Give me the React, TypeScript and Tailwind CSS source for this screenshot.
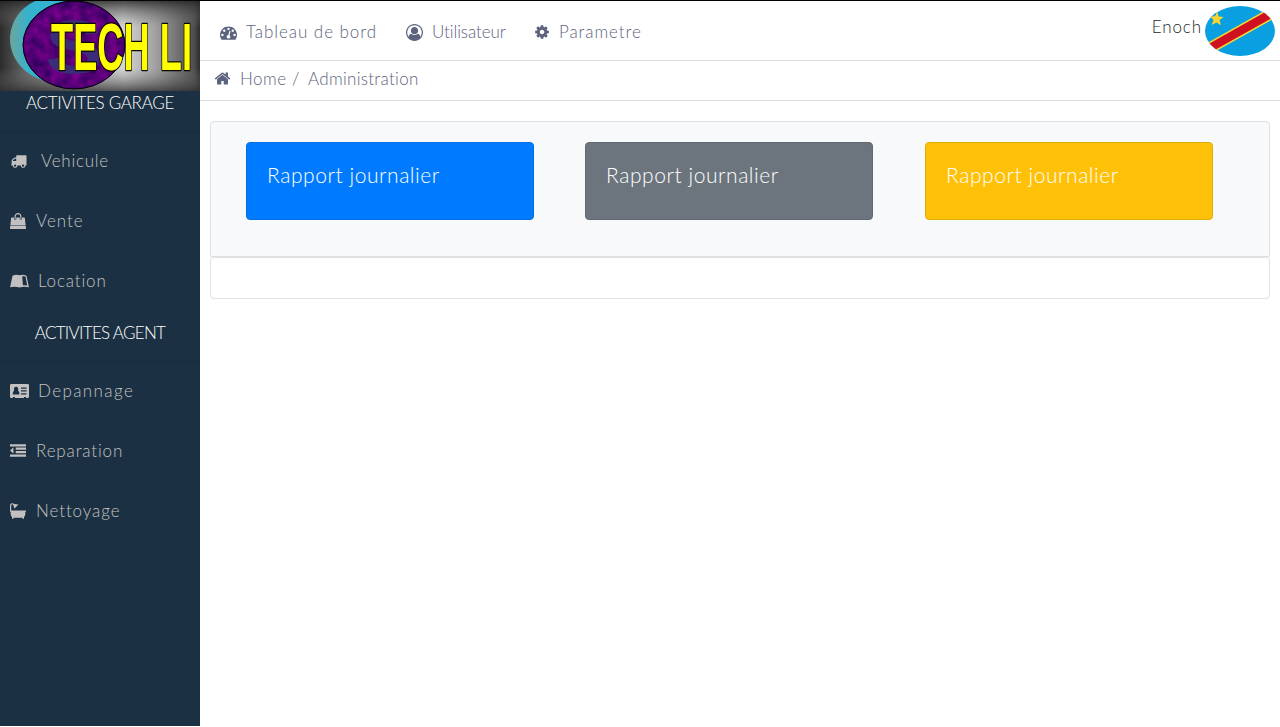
import React from 'react';

type IconProps = { d: string; w: number; h?: number; vb?: string; className?: string };
function Icon({ d, w, h = 16, vb = '0 0 1792 1792', className = '' }: IconProps) {
  return (
    <svg width={w} height={h} viewBox={vb} fill="currentColor" fillRule="evenodd" className={`shrink-0 ${className}`}>
      <path d={d} />
    </svg>
  );
}

const HOME = 'M1472 992v480q0 26-19 45t-45 19h-384v-384h-256v384h-384q-26 0-45-19t-19-45v-480q0-1 .5-3t.5-3l575-474 575 474q1 2 1 6zm223-69l-62 74q-8 9-21 11h-3q-13 0-21-7l-692-577-692 577q-12 8-24 7-13-2-21-11l-62-74q-8-10-7-23.5t11-21.5l719-599q32-26 76-26t76 26l244 204v-195q0-14 9-23t23-9h192q14 0 23 9t9 23v408l219 182q10 8 11 21.5t-7 23.5z';
const COG = 'M1152 896q0-106-75-181t-181-75-181 75-75 181 75 181 181 75 181-75 75-181zm512-109v222q0 12-8 23t-20 13l-185 28q-19 54-39 91 35 50 107 138 10 12 10 25t-9 23q-27 37-99 108t-94 71q-12 0-26-9l-138-108q-44 23-91 38-16 136-29 186-7 28-36 28h-222q-14 0-24.5-8.5t-11.5-21.5l-28-184q-49-16-90-37l-141 107q-10 9-25 9-14 0-25-11-126-114-165-168-7-10-7-23 0-12 8-23 15-21 51-66.5t54-70.5q-27-50-41-99l-183-27q-13-2-21-12.5t-8-23.5v-222q0-12 8-23t19-13l186-28q14-46 39-92-40-57-107-138-10-12-10-24 0-10 9-23 26-36 98.5-107.5t94.5-71.5q13 0 26 10l138 107q44-23 91-38 16-136 29-186 7-28 36-28h222q14 0 24.5 8.5t11.5 21.5l28 184q49 16 90 37l142-107q9-9 24-9 13 0 25 10 129 119 165 170 7 8 7 22 0 12-8 23-15 21-51 66.5t-54 70.5q26 50 41 98l183 28q13 2 21 12.5t8 23.5z';
const TRUCK = 'M640 1408q0-52-38-90t-90-38-90 38-38 90 38 90 90 38 90-38 38-90zm-384-512h384v-256h-158q-13 0-22 9l-195 195q-9 9-9 22v30zm1280 512q0-52-38-90t-90-38-90 38-38 90 38 90 90 38 90-38 38-90zm256-1088v1024q0 15-4 26.5t-13.5 18.5-16.5 11.5-23.5 6-22.5 2-25.5 0-22.5-.5q0 106-75 181t-181 75-181-75-75-181h-384q0 106-75 181t-181 75-181-75-75-181h-64q-3 0-22.5.5t-25.5 0-22.5-2-23.5-6-16.5-11.5-13.5-18.5-4-26.5q0-26 19-45t45-19v-320q0-8-.5-35t0-38 2.5-34.5 6.5-37 14-30.5 22.5-30l198-198q19-19 50.5-32t58.5-13h160v-192q0-26 19-45t45-19h1024q26 0 45 19t19 45z';
const GAUGE = 'M384 1152q0-53-37.5-90.5t-90.5-37.5-90.5 37.5-37.5 90.5 37.5 90.5 90.5 37.5 90.5-37.5 37.5-90.5zm192-448q0-53-37.5-90.5t-90.5-37.5-90.5 37.5-37.5 90.5 37.5 90.5 90.5 37.5 90.5-37.5 37.5-90.5zm428 481l101-382q6-26-7.5-48.5t-38.5-29.5-48 6.5-30 39.5l-101 382q-60 5-107 43.5t-63 98.5q-20 77 20 146t117 89 146-20 89-117q16-60-6-117t-72-91zm660-33q0-53-37.5-90.5t-90.5-37.5-90.5 37.5-37.5 90.5 37.5 90.5 90.5 37.5 90.5-37.5 37.5-90.5zm-640-640q0-53-37.5-90.5t-90.5-37.5-90.5 37.5-37.5 90.5 37.5 90.5 90.5 37.5 90.5-37.5 37.5-90.5zm448 192q0-53-37.5-90.5t-90.5-37.5-90.5 37.5-37.5 90.5 37.5 90.5 90.5 37.5 90.5-37.5 37.5-90.5zm320 448q0 261-141 483-19 29-54 29h-1402q-35 0-54-29-141-221-141-483 0-182 71-348t191-286 286-191 348-71 348 71 286 191 191 286 71 348z';
const USER = 'M896 0q182 0 348 71t286 191 191 286 71 348q0 181-70.5 347t-190.5 286-286 191.5-349 71.5-349-71-285.5-191.5-190.5-286-71-347.5 71-348 191-286 286-191 348-71zm619 1351q149-205 149-455 0-156-61-298t-164-245-245-164-298-61-298 61-245 164-164 245-61 298q0 250 149 455 66-327 306-327 131 128 313 128t313-128q240 0 306 327zm-235-647q0-159-112.5-271.5t-271.5-112.5-271.5 112.5-112.5 271.5 112.5 271.5 271.5 112.5 271.5-112.5 112.5-271.5z';
const OUTDENT = 'M384 544v576q0 13-9.5 22.5t-22.5 9.5q-14 0-23-9l-288-288q-9-9-9-23t9-23l288-288q9-9 23-9 13 0 22.5 9.5t9.5 22.5zM0 1280h1792v256H0zM640 896h1152v256H640zM640 512h1152v256H640zM0 128h1792v256H0z';
const BAG = 'M1757 1408l35 313q3 28-16 50-19 21-48 21h-1664q-29 0-48-21-19-22-16-50l35-313h1722zm-93-839l86 775h-1708l86-775q3-24 21-40.5t43-16.5h256v128q0 53 37.5 90.5t90.5 37.5 90.5-37.5 37.5-90.5v-128h384v128q0 53 37.5 90.5t90.5 37.5 90.5-37.5 37.5-90.5v-128h256q25 0 43 16.5t21 40.5zm-384-185v256q0 26-19 45t-45 19-45-19-19-45v-256q0-106-75-181t-181-75-181 75-75 181v256q0 26-19 45t-45 19-45-19-19-45v-256q0-159 112.5-271.5t271.5-112.5 271.5 112.5 112.5 271.5z';
const BOOK = 'M2.500 2.700Q6 .9 9.500 2.300Q13 .9 16.500 2.700L18.900 14.200Q14 13 9.500 14.500Q5 13 .1 14.200ZM12.200 3.300L12.900 12.300Q15 12 17.200 12.500L15.500 3.600Q13.800 3 12.200 3.300Z';
const CARD = 'M1.300 1H17.700Q19 1 19 2.300V13.700Q19 15 17.700 15H16V14H14V15H5V14H3V15H1.300Q0 15 0 13.700V2.300Q0 1 1.300 1ZM2.700 11.500H9.400Q9.700 8.400 8.100 7.800Q9 4 6.100 3.700Q3.200 4 4.100 7.800Q2.500 8.400 2.700 11.500ZM11 4.500V5.700H16.600V4.500ZM11 7.300V8.500H16.600V7.300ZM11 10.200V11.400H16.600V10.200Z';
const BATH = 'M0 8V2.600Q0 .2 2.300 .2Q3.700 .2 4.300 1.300Q5.800 .6 7 1.500L7.500 1L8.200 1.700L4.500 5.400L3.800 4.700L4.200 4.200Q3.300 3.400 3.300 2.100Q2.900 1.300 2.200 1.300Q1.200 1.400 1.200 2.600V7.500H16V8.800H15.300V11Q15.300 13 14 13.900V15.700H12.500V14.700H3.500V15.700H2V13.900Q.7 13 .7 11V8.800H0Z';

function Logo() {
  return (
    <svg width="200" height="91" viewBox="0 0 200 91" className="block shrink-0">
      <defs>
        <linearGradient id="metal">
          <stop offset="0" stopColor="#222" />
          <stop offset=".12" stopColor="#5c5c5c" />
          <stop offset=".3" stopColor="#a0a0a0" />
          <stop offset=".62" stopColor="#dedede" />
          <stop offset=".78" stopColor="#a2a2a2" />
          <stop offset=".97" stopColor="#484848" />
          <stop offset="1" stopColor="#222" />
        </linearGradient>
        <linearGradient id="shade" x2="0" y2="1">
          <stop offset="0" stopColor="#222" stopOpacity=".85" />
          <stop offset=".3" stopColor="#888" stopOpacity=".1" />
          <stop offset=".75" stopColor="#888" stopOpacity=".1" />
          <stop offset="1" stopColor="#333" stopOpacity=".8" />
        </linearGradient>
        <linearGradient id="cyan"><stop stopColor="#6ca59c" /><stop offset=".2" stopColor="#35b2cd" /></linearGradient>
        <filter id="grain"><feTurbulence type="fractalNoise" baseFrequency=".1" numOctaves="3" seed="4" /><feColorMatrix values="0 0 0 0 .33 0 0 0 0 0 0 0 0 0 .36 0 0 0 1.1 -.2" /><feComposite in2="SourceGraphic" operator="in" /></filter>
      </defs>
      <path fill="url(#metal)" d="M0 0h200v91H0z" />
      <path fill="url(#shade)" d="M0 0h200v91H0z" />
      <ellipse cx="57" cy="39" rx="47" ry="43" fill="url(#cyan)" />
      <ellipse cx="74" cy="45" rx="51" ry="44" fill="#32005f" stroke="#050008" />
      <ellipse cx="74" cy="45" rx="50" ry="43" fill="#41006e" filter="url(#grain)" />
      <text x="45" y="73" fontFamily="Liberation Sans" fontWeight="bold" fontSize="76" textLength="58" lengthAdjust="spacingAndGlyphs" fill="#3c2b78">S</text>
      <text
        x="51" y="69.500" fontFamily="Liberation Sans" fontWeight="bold" fontSize="67"
        textLength="141" lengthAdjust="spacingAndGlyphs" fill="#ffff00" stroke="#090900"
        strokeWidth="2.500" strokeLinejoin="round" paintOrder="stroke"
      >TECH LI</text>
      <path fill="#050505" d="M0 0h200v1H0z" />
    </svg>
  );
}

function Entry({ icon, label, gap, className }: { icon: React.ReactNode; label: string; gap: string; className: string }) {
  return <a className={`flex h-[60px] items-center pl-[10px] text-[#c3c0c1] ${gap}`}>{icon}<span className={className}>{label}</span></a>;
}

function Report({ className }: { className: string }) {
  return (
    <div className={`h-[78px] w-[288px] rounded border pl-5 pt-4 text-[21px] leading-8 tracking-[0.56px] text-white ${className}`}>
      Rapport journalier
    </div>
  );
}

function Flag() {
  return (
    <svg width="70" height="50" viewBox="0 0 70 50" className="shrink-0">
      <clipPath id="oval"><ellipse cx="35" cy="25" rx="35" ry="25" /></clipPath>
      <g clipPath="url(#oval)">
        <path fill="#0a9fe0" d="M0 0h70v50H0z" />
        <path stroke="#f7d632" strokeWidth="11.500" d="M-4 47L76 2" />
        <path stroke="#ce1021" strokeWidth="8.400" d="M-4 47L76 2" />
        <path fill="#f7d632" d="M12.200 5.500L13.700 10.500L18.700 11.100L14.600 14.100L16 19.300L11.500 16.500L6.700 19L8.500 14L5 10.400L10 10.300Z" />
      </g>
    </svg>
  );
}

export default function App() {
  return (
    <div className="flex h-[727px] w-[1280px] overflow-hidden bg-white font-['Lato','Noto_Sans',sans-serif] text-[17px] font-light leading-6">
      <aside className="flex h-[726px] w-[200px] shrink-0 flex-col bg-[#1b3143]">
        <Logo />
        <h2 className="h-[41px] border-b border-[#182c3d] text-center font-light tracking-[-0.3px] text-white">ACTIVITES GARAGE</h2>
        <div className="-mt-px">
          <Entry icon={<Icon d={TRUCK} w={17} />} label="Vehicule" gap="gap-[14px]" className="tracking-[0.75px]" />
          <Entry icon={<Icon d={BAG} w={16} />} label="Vente" gap="gap-[10px]" className="tracking-[0.95px]" />
          <Entry icon={<Icon d={BOOK} w={19} vb="0 0 19 16" />} label="Location" gap="gap-[9px]" className="tracking-[0.85px]" />
        </div>
        <h2 className="mt-[10px] h-[41px] border-b border-[#182c3d] text-center font-light tracking-[-0.7px] text-white">ACTIVITES AGENT</h2>
        <div className="-mt-px">
          <Entry icon={<Icon d={CARD} w={19} vb="0 0 19 16" />} label="Depannage" gap="gap-[9px]" className="tracking-[1.4px]" />
          <Entry icon={<Icon d={OUTDENT} w={16} />} label="Reparation" gap="gap-[10px]" className="tracking-[0.85px]" />
          <Entry icon={<Icon d={BATH} w={16} vb="0 0 16 16" />} label="Nettoyage" gap="gap-[10px]" className="tracking-[0.9px]" />
        </div>
      </aside>
      <main className="min-w-0 flex-1 border-t border-black">
        <header className="flex h-[60px] justify-between border-b border-[#d8dadd] pl-5 pr-[5px] text-[#5c637d]">
          <nav className="flex h-[62px] items-center">
            <a className="flex w-[186px] items-center gap-[10px]"><Icon d={GAUGE} w={17} h={17} /><span className="-ml-px tracking-[0.95px]">Tableau de bord</span></a>
            <a className="flex w-[129px] items-center gap-[10px]"><Icon d={USER} w={17} h={17} /><span className="-ml-px tracking-[-0.1px]">Utilisateur</span></a>
            <a className="flex items-center gap-[9px]"><Icon d={COG} w={16} className="-ml-px" /><span className="tracking-[0.9px]">Parametre</span></a>
          </nav>
          <div className="flex h-[60px] items-center gap-1 text-[#212529]"><span className="-mr-px mb-2 tracking-[0.9px]">Enoch</span><Flag /></div>
        </header>
        <div className="flex h-[40px] items-center border-b border-[#d8dadd] pb-1 pl-[14px] text-[#5c637d]">
          <Icon d={HOME} w={17} h={17} /><span className="ml-[9px] w-[52px] tracking-[0.5px]">Home</span><span className="w-4">/</span><span className="tracking-[0.3px]">Administration</span>
        </div>
        <div className="px-[10px] pt-5">
          <section className="grid h-[136px] grid-cols-[339px_340px_288px] rounded-t border border-[#dfe0e1] bg-[#f7f9fb] pl-[35px] pt-5">
            <Report className="border-[#006ee5] bg-[#007bff]" />
            <Report className="border-[#62696f] bg-[#6c757d]" />
            <Report className="border-[#e2ac08] bg-[#ffc107]" />
          </section>
          <section className="h-[42px] rounded border border-[#dfe0e1] bg-white" />
        </div>
      </main>
    </div>
  );
}
